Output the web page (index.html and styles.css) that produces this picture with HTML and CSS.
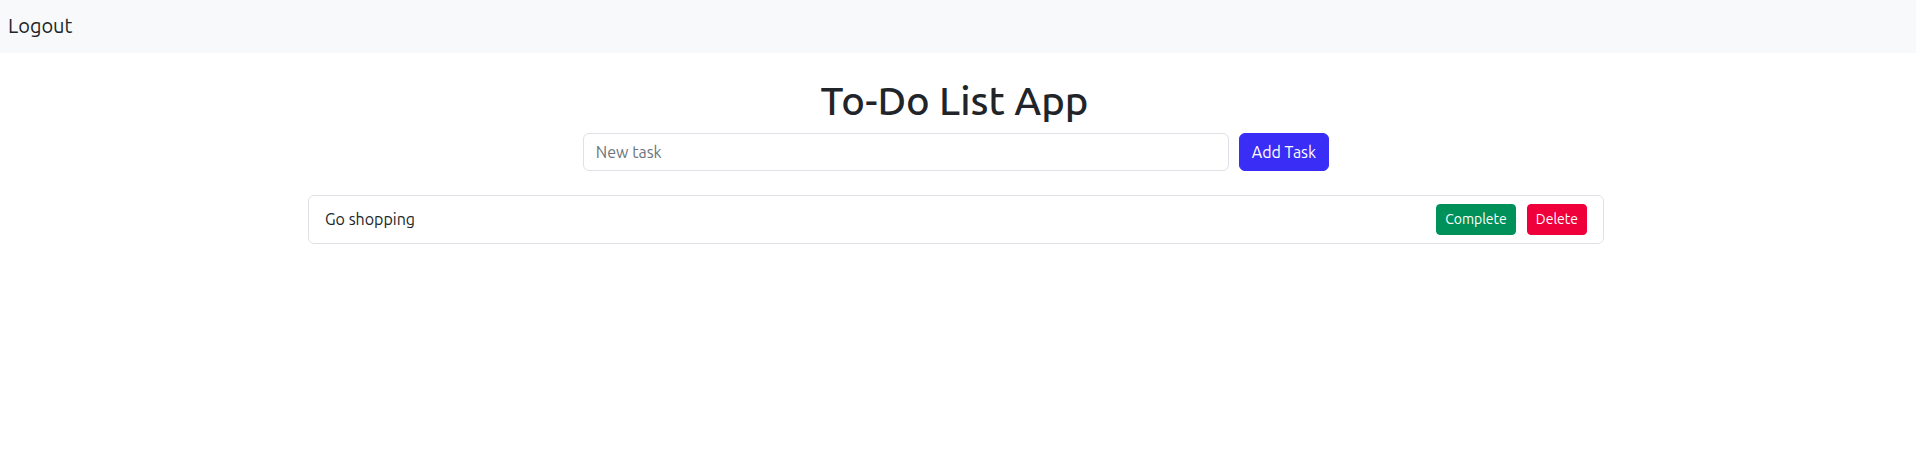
FILE: index.html
```html
<!DOCTYPE html>
<html lang="en">
<head>
<meta charset="utf-8">
<title>To-Do List App</title>
<link rel="stylesheet" href="styles.css">
</head>
<body>
<nav class="navbar">
  <a class="brand" href="#">Logout</a>
</nav>
<main class="container">
  <h1 class="title">To-Do List App</h1>
  <form class="add-form">
    <input class="task-input" type="text" placeholder="New task">
    <button class="btn btn-primary" type="button">Add Task</button>
  </form>
  <ul class="task-list">
    <li class="task-item">
      <span class="task-text">Go shopping</span>
      <div class="task-actions">
        <button class="btn btn-sm btn-success" type="button">Complete</button>
        <button class="btn btn-sm btn-danger" type="button">Delete</button>
      </div>
    </li>
  </ul>
</main>
</body>
</html>
```

FILE: styles.css
```css
* { box-sizing: border-box; }

body {
  margin: 0;
  font-family: "Ubuntu", "Liberation Sans", Arial, sans-serif;
  font-size: 16px;
  line-height: 1.5;
  color: #212529;
  background: #fff;
}

.navbar {
  height: 53px;
  background: #f8f9fa;
  display: flex;
  align-items: center;
  padding: 0 8px 2px;
}

.brand {
  font-size: 20px;
  line-height: 30px;
  color: #212529;
  text-decoration: none;
}

.container {
  max-width: 1320px;
  margin: 24px auto 0;
  padding: 0 12px;
}

.title {
  margin: 0 0 8px;
  padding-right: 7px;
  font-size: 40px;
  font-weight: 500;
  line-height: 48px;
  text-align: center;
  color: #212529;
}

.add-form {
  display: flex;
  justify-content: center;
  gap: 10px;
  margin: 0 0 24px;
  padding-right: 4px;
}

.task-input {
  width: 646px;
  height: 38px;
  padding: 6px 12px;
  font: inherit;
  color: #212529;
  border: 1px solid #dee2e6;
  border-radius: 6px;
  outline: none;
}

.task-input::placeholder { color: #6c757d; }

.btn {
  font-family: inherit;
  font-size: 16px;
  line-height: 24px;
  padding: 6px 12px;
  border: 1px solid transparent;
  border-radius: 6px;
  color: #fff;
  cursor: pointer;
}

.btn-primary { background: #3a2df6; border-color: #3a2df6; }

.btn-sm {
  font-size: 14px;
  line-height: 21px;
  padding: 4px 8px;
  border-radius: 4px;
}

.btn-success { background: #00915a; border-color: #00915a; }
.btn-danger { background: #f0003b; border-color: #f0003b; }

.task-list {
  list-style: none;
  margin: 0;
  padding: 0;
}

.task-item {
  display: flex;
  align-items: center;
  justify-content: space-between;
  margin-left: -2px;
  margin-right: 2px;
  padding: 8px 16px;
  border: 1px solid #dee2e6;
  border-radius: 6px;
}

.task-text { line-height: 24px; margin-top: -1px; }

.task-actions {
  display: flex;
  gap: 11px;
}
```
